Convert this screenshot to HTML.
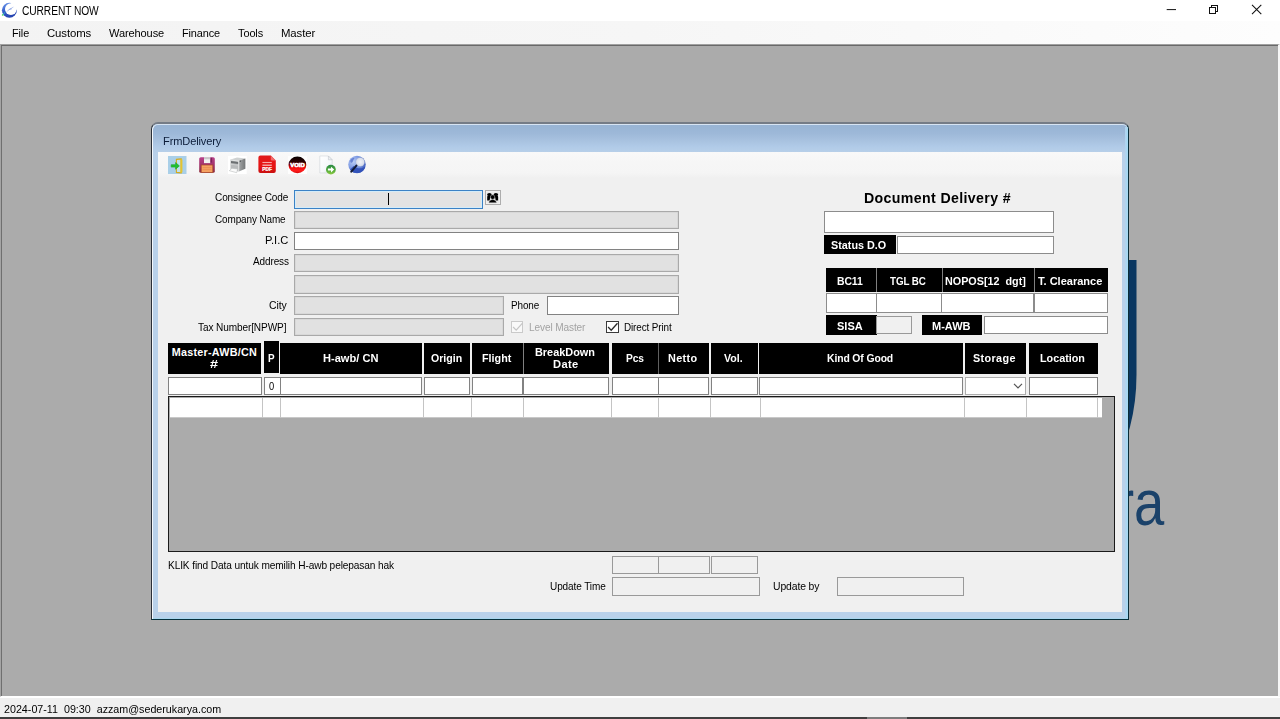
<!DOCTYPE html>
<html>
<head>
<meta charset="utf-8">
<title>CURRENT NOW</title>
<style>
*{box-sizing:border-box;margin:0;padding:0}
html,body{width:1280px;height:719px;overflow:hidden;background:#fff;font-family:"Liberation Sans",sans-serif;}
.a{position:absolute}
.tx{transform-origin:0 0;line-height:14px;white-space:pre;font-family:"Liberation Sans",sans-serif}
#titlebar{left:0;top:0;width:1280px;height:22px;background:#fff}
#menubar{left:0;top:21px;width:1280px;height:23.5px;background:linear-gradient(90deg,#f3f3f3 0%,#f6f6f6 50%,#fdfdfd 100%)}
#mdi{left:0;top:43.9px;width:1280px;height:653.3px;background:#ababab;border-top:1px solid #a0a0a0;border-left:1.1px solid #a4a4a4;border-right:2.2px solid #f6f6f6;border-bottom:1px solid #fff;box-shadow:inset 0.9px 0.9px 0 #696969}
#status{left:0;top:697px;width:1280px;height:20px;background:#f0f0f0;border-top:1px solid #fff}
#bottomline{left:0;top:717px;width:1280px;height:2px;background:#3f3f3f}
</style>
</head>
<body>
<div class="a" id="titlebar"></div>
<div class="a" id="menubar"></div>
<div class="a" id="mdi"></div>
<div class="a" id="status"></div>
<div class="a" id="bottomline"></div>
<div class="a" style="left:867px;top:717px;width:40px;height:2px;background:#7d7d7d"></div>
<svg class="a" style="left:0;top:0" width="22" height="22" viewBox="0 0 22 22">
  <defs><linearGradient id="ag" x1="0.2" y1="0" x2="0.7" y2="1"><stop offset="0" stop-color="#6c97ea"/><stop offset="0.45" stop-color="#3159c8"/><stop offset="1" stop-color="#2440ac"/></linearGradient>
  <mask id="am"><rect width="22" height="22" fill="#fff"/><circle cx="10.9" cy="9.1" r="5.95" fill="#000"/><path d="M9.4 10.3 L12.4 -2 H24 V8.6 Z" fill="#000"/></mask></defs>
  <circle cx="9.4" cy="10.3" r="7.5" fill="url(#ag)" mask="url(#am)"/>
  <path d="M5.9 12.6 L9.2 9 L14.2 6.6 L11 8.9 L12 9.3 L9.4 9.7 Z" fill="#7b96de"/>
  <circle cx="2.7" cy="14.9" r="0.9" fill="#52d86c"/>
  <path d="M3.1 14.3 L5.3 12.3" stroke="#36bccb" stroke-width="1"/>
</svg>
<svg class="a" style="left:1160px;top:0" width="120" height="22" viewBox="0 0 120 22" fill="none" stroke="#111" stroke-width="1">
  <path d="M6.7 9.6 H16"/>
  <path d="M49.5 7.5 H55.6 V13.6 H49.5 Z" shape-rendering="crispEdges"/>
  <path d="M51.5 7.5 V5.5 H57.6 V11.6 H55.6" shape-rendering="crispEdges"/>
  <path d="M92 4.8 L101.3 14.1 M101.3 4.8 L92 14.1" stroke-width="1.05"/>
</svg>
<!-- background logo peeking out -->
<svg class="a" style="left:1100px;top:250px" width="100" height="300" viewBox="0 0 100 300">
  <path d="M0 10 H36.5 V125 A207 207 0 0 1 10.7 225 L0 225 Z" fill="#0a3761"/>
</svg>
<div class="a" id="logotx" style="left:1115.8px;top:447.6px;font-family:'Liberation Sans',sans-serif;font-size:64px;line-height:110px;color:#1b426a;white-space:nowrap;transform:scaleX(0.85);transform-origin:0 0">ra</div>

<style>
#dlg{left:151px;top:121.7px;width:978.2px;height:498.1px;background:#b9d1ea;border-left:1px solid #2b3038;border-top:2px solid #757c86;border-right:1.1px solid #0a2c38;border-bottom:1.3px solid #06303c;border-radius:7px 7px 0 0;overflow:hidden}
#dlgin{left:0;top:0;width:976.1px;height:496px;border-left:1.2px solid #f4f8fc;border-top:1px solid #d7e4f3;border-radius:6px 6px 0 0;background:linear-gradient(180deg,#98b4d4 0px,#9db8d8 8px,#a7c1df 15px,#b1cbe8 22px,#b8d0e9 28px,#b9d1ea 32px,#b9d1ea 100%)}
#dlgcy{right:0;top:3px;width:2.8px;bottom:0;background:linear-gradient(90deg,#b3d3ee,#a3daf4)}
#dlgcb{left:1px;right:0;bottom:0;height:1.2px;background:#a9d6ee}
#dtitle{left:162.5px;top:134px;font-size:11.5px;line-height:14px;color:#0a1a33;white-space:nowrap}
#content{left:158px;top:152px;width:964px;height:460px;background:#f0f0f0}
#toolbar{left:158px;top:152px;width:964px;height:25.5px;background:linear-gradient(180deg,#f9f9f9,#f6f6f6 40%,#f5f5f5 80%,#f0f0f0)}
.lbl{font-family:"Liberation Sans",sans-serif;font-size:11px;line-height:14px;color:#000;white-space:nowrap}
.r{text-align:right}
.tb{background:#fff;border:1px solid #828282}
.ro{background:#e1e1e1;border:1px solid #a9a9a9;box-shadow:inset 0 0 0 0.5px #d0d0d0}
.dis{background:#f0f0f0;border:1px solid #999}
.bk{background:#000;color:#fff;font-weight:bold;font-size:11px;line-height:13px;text-align:center;display:flex;align-items:center;justify-content:center;white-space:nowrap}
.gl{background:#c4c4c4;width:1px;top:397.5px;height:20.5px}
</style>
<div class="a" id="dlg"><div class="a" id="dlgin"></div><div class="a" id="dlgcy"></div><div class="a" id="dlgcb"></div></div>
<div class="a" id="content"></div>
<div class="a" id="toolbar"></div>
<!-- 1 login -->
<svg class="a" style="left:168px;top:155.5px" width="18.5" height="18.5" viewBox="0 0 18.5 18.5">
  <rect width="18.5" height="18.5" fill="#a9cfe8"/>
  <path d="M8.4 3.4 L13.2 2.9 V16.9 L8.4 16.4 Z" fill="#bfe0ee" stroke="#d4aa1c" stroke-width="1.1"/>
  <path d="M12.4 3 L14.4 3.6 V16.2 L12.4 16.9 Z" fill="#e4c430"/>
  <path d="M3.2 8.7 H7.6 V6.6 L11.4 9.9 L7.6 13.2 V11.1 H3.2 Z" fill="#1fc030" stroke="#18a82a" stroke-width="0.6" stroke-linejoin="round"/>
</svg>
<!-- 2 floppy -->
<svg class="a" style="left:199.3px;top:156.6px" width="16" height="16" viewBox="0 0 16 16">
  <defs><linearGradient id="fg" x1="0" y1="0" x2="0" y2="1"><stop offset="0" stop-color="#b8408a"/><stop offset="0.55" stop-color="#a03468"/><stop offset="1" stop-color="#8c2c38"/></linearGradient></defs>
  <rect x="0.2" y="0.2" width="15.6" height="15.6" rx="1.6" fill="url(#fg)"/>
  <rect x="5" y="0.3" width="6.2" height="5.8" fill="#f2f2f2"/>
  <rect x="5" y="0.3" width="6.2" height="2" fill="#c8c8c8"/>
  <rect x="11.6" y="0.8" width="1.5" height="4.8" fill="#7c2458"/>
  <rect x="2.2" y="8" width="11.6" height="7.4" fill="#f5a262" stroke="#a84828" stroke-width="0.7"/>
  <path d="M3.6 10.6 H12.4 M3.6 12.6 H12.4" stroke="#e88c50" stroke-width="0.8"/>
</svg>
<!-- 3 printer -->
<svg class="a" style="left:228px;top:155.5px" width="18.7" height="18.5" viewBox="0 0 18.7 18.5">
  <defs><linearGradient id="prg" x1="0" y1="0" x2="1" y2="0"><stop offset="0" stop-color="#a4a7a8"/><stop offset="1" stop-color="#747778"/></linearGradient></defs>
  <rect width="18.7" height="18.5" fill="#fff"/>
  <path d="M2.6 3.4 L9 1.5 L17.4 2.6 L10.8 4.6 Z" fill="#cfd2d2"/>
  <path d="M2.5 3.4 L10.8 4.6 V15.6 L2.5 13.4 Z" fill="#b9bbbc"/>
  <path d="M2.5 3.4 L10.8 4.6 V5.7 L2.5 4.5 Z" fill="#e2e4e4"/>
  <path d="M3 4.9 L10.3 5.9 V7.9 L3 7 Z" fill="#6c7072"/>
  <path d="M3 8 L10.3 8.9 V9.6 L3 8.7 Z" fill="#d4d6d6"/>
  <path d="M10.8 4.6 L17.4 2.6 V12.8 L10.8 15.6 Z" fill="url(#prg)"/>
  <path d="M11.6 4.9 L13 4.5 V5.7 L11.6 6.1 Z" fill="#4e5254"/>
  <path d="M10.8 4.6 V15.6" stroke="#eceeee" stroke-width="0.8"/>
  <path d="M1.3 14.7 L3.9 12.3 L9.7 13 L8.7 16.7 Z" fill="#fbfbfb" stroke="#b4b7b8" stroke-width="0.55"/>
</svg>
<!-- 4 pdf -->
<svg class="a" style="left:258px;top:155.4px" width="18.2" height="18.4" viewBox="0 0 18.2 18.4">
  <defs><linearGradient id="pg" x1="0" y1="0" x2="0" y2="1"><stop offset="0" stop-color="#e01b1b"/><stop offset="0.6" stop-color="#e81414"/><stop offset="1" stop-color="#c90f0f"/></linearGradient></defs>
  <path d="M2.4 0.4 H12.8 L17.8 5.4 V16 A2 2 0 0 1 15.8 18 H2.4 A2 2 0 0 1 0.4 16 V2.4 A2 2 0 0 1 2.4 0.4 Z" fill="url(#pg)"/>
  <path d="M12.8 0.4 L17.8 5.4 H14 A1.2 1.2 0 0 1 12.8 4.2 Z" fill="#f06a6a"/>
  <path d="M4.4 7.5 H13.8" stroke="#f7a8a8" stroke-width="1.1"/><path d="M4.4 10.2 H13.8" stroke="#fbd4d4" stroke-width="1.1"/>
  <text x="9.1" y="15.9" font-family="Liberation Sans, sans-serif" font-weight="bold" font-size="4.9" fill="#fff" text-anchor="middle" stroke="#fff" stroke-width="0.25">PDF</text>
</svg>
<!-- 5 void -->
<svg class="a" style="left:288px;top:155.5px" width="19" height="18.6" viewBox="0 0 19 18.6">
  <defs><linearGradient id="vg" x1="0" y1="0" x2="0" y2="1"><stop offset="0" stop-color="#050000"/><stop offset="0.32" stop-color="#2a0000"/><stop offset="0.5" stop-color="#8a0202"/><stop offset="0.66" stop-color="#f00a0a"/><stop offset="0.86" stop-color="#ff1c1c"/><stop offset="1" stop-color="#d40a0a"/></linearGradient></defs>
  <rect width="19" height="18.6" fill="#fdfdfd"/>
  <ellipse cx="9.4" cy="8.9" rx="8.9" ry="8.3" fill="url(#vg)"/>
  <text x="9.5" y="11" font-family="Liberation Sans, sans-serif" font-weight="bold" font-size="5.2" fill="#fff" text-anchor="middle" stroke="#fff" stroke-width="0.5" textLength="14.4" lengthAdjust="spacingAndGlyphs">VOID</text>
</svg>
<!-- 6 doc + arrow -->
<svg class="a" style="left:318px;top:154.5px" width="20" height="20.5" viewBox="0 0 20 20.5">
  <defs><linearGradient id="dg" x1="0" y1="0" x2="1" y2="1"><stop offset="0" stop-color="#ffffff"/><stop offset="0.6" stop-color="#f6f8fb"/><stop offset="1" stop-color="#d5deed"/></linearGradient>
  <linearGradient id="gg" x1="0" y1="0" x2="0" y2="1"><stop offset="0" stop-color="#2c8a48"/><stop offset="0.5" stop-color="#4aa53a"/><stop offset="1" stop-color="#8ccb42"/></linearGradient></defs>
  <path d="M1.8 1 H10.4 L14.2 4.8 V18 H1.8 Z" fill="url(#dg)" stroke="#d6dade" stroke-width="0.7"/>
  <path d="M10.4 1 L14.2 4.8 H10.4 Z" fill="#eef0f3" stroke="#b9bdc4" stroke-width="0.5"/>
  <circle cx="12.9" cy="14.6" r="4.9" fill="url(#gg)"/>
  <path d="M9.9 13.6 H13 V11.8 L16.2 14.6 L13 17.4 V15.6 H9.9 Z" fill="#fff"/>
</svg>
<!-- 7 search globe -->
<svg class="a" style="left:347px;top:155px" width="20" height="19.5" viewBox="0 0 20 19.5">
  <defs><radialGradient id="sg" cx="0.3" cy="0.35" r="0.85"><stop offset="0" stop-color="#b9ccf5"/><stop offset="0.45" stop-color="#7b98e2"/><stop offset="1" stop-color="#2f4fb4"/></radialGradient>
  <radialGradient id="lg" cx="0.5" cy="0.5" r="0.6"><stop offset="0" stop-color="#f0f2f7"/><stop offset="0.65" stop-color="#d9dfec"/><stop offset="1" stop-color="#97a4c6"/></radialGradient></defs>
  <circle cx="10" cy="9.5" r="8.7" fill="url(#sg)"/>
  <path d="M3.4 5 C5 3 6.6 2.4 7.4 3.4 C6 4.6 6.4 6.4 5 7.6 C4 8.4 3 7 3.4 5 Z" fill="#3454bc" opacity="0.55"/>
  <path d="M3 14.5 A8.7 8.7 0 0 0 18.4 11.6 C14 14.8 9 13 6.6 11 Z" fill="#3050b8" opacity="0.9"/>
  <circle cx="13.2" cy="7" r="4.5" fill="url(#lg)"/>
  <path d="M9.4 10.6 L4.3 16.6" stroke="#141c38" stroke-width="2.1" stroke-linecap="round"/>
</svg>

<!-- left form -->
<div class="a" style="left:294px;top:190px;width:188.5px;height:19px;background:#e3e3e3;border:1px solid #3b82c6;box-shadow:inset 0 0 0 1px #d4ecf9"></div>
<div class="a" style="left:388px;top:193px;width:1px;height:12px;background:#000"></div>
<div class="a" style="left:484.5px;top:190px;width:16.5px;height:14.5px;background:#ececec;border:1px solid #adadad;box-shadow:inset 0 0 0 0.5px #f6f6f6"></div>
<div class="a ro" style="left:294px;top:211px;width:385px;height:18px"></div>
<div class="a tb" style="left:294px;top:231.5px;width:385px;height:18px"></div>
<div class="a ro" style="left:294px;top:254px;width:385px;height:18px"></div>
<div class="a ro" style="left:294px;top:275px;width:385px;height:18.5px"></div>
<div class="a ro" style="left:294px;top:296px;width:210px;height:18.5px"></div>
<div class="a ro" style="left:294px;top:317.5px;width:210px;height:18px"></div>
<div class="a tb" style="left:547px;top:296px;width:132px;height:18.5px"></div>
<div class="a" style="left:510.6px;top:321px;width:12.4px;height:12.3px;background:#f9f9f9;border:1px solid #cacaca"></div>
<div class="a" style="left:606px;top:320.9px;width:12.8px;height:12.3px;background:#fff;border:1.2px solid #3a3a3a"></div>
<svg class="a" style="left:510.6px;top:321px" width="13" height="13" viewBox="0 0 13 13"><path d="M2.1 6 L5.2 9.2 L11.5 2.2" fill="none" stroke="#c6c6c6" stroke-width="1.25"/></svg>
<svg class="a" style="left:606px;top:321px" width="13" height="13" viewBox="0 0 13 13"><path d="M2.1 6 L5.2 9.2 L11.5 2.2" fill="none" stroke="#2a2a2a" stroke-width="1.3"/></svg>
<!-- right form -->
<div class="a tb" style="left:824px;top:211px;width:229.5px;height:21.5px;border-color:#8c8c8c"></div>
<div class="a bk" style="left:824px;top:235px;width:71.5px;height:18.5px"></div>
<div class="a tb" style="left:897px;top:235.5px;width:156.5px;height:18px;border-color:#8c8c8c"></div>
<div class="a" style="left:826px;top:268px;width:281.5px;height:23.5px;background:#000"></div>
<div class="a bk" style="left:826px;top:268px;width:50px;height:23.5px"></div>
<div class="a bk" style="left:876px;top:268px;width:65.5px;height:23.5px;border-left:1px solid #808080"></div>
<div class="a bk" style="left:941.5px;top:268px;width:92px;height:23.5px;border-left:1px solid #808080"></div>
<div class="a bk" style="left:1033.5px;top:268px;width:74px;height:23.5px;border-left:1px solid #808080"></div>
<div class="a tb" style="left:826px;top:293px;width:50.5px;height:19.5px;border-color:#8c8c8c"></div>
<div class="a tb" style="left:875.5px;top:293px;width:66.5px;height:19.5px;border-color:#8c8c8c"></div>
<div class="a tb" style="left:941px;top:293px;width:93px;height:19.5px;border-color:#8c8c8c"></div>
<div class="a tb" style="left:1033.5px;top:293px;width:74px;height:19.5px;border-color:#8c8c8c"></div>
<div class="a bk" style="left:826px;top:315px;width:50.5px;height:19.5px"></div>
<div class="a dis" style="left:876px;top:315.5px;width:35.5px;height:18px"></div>
<div class="a bk" style="left:922px;top:315px;width:59.5px;height:19.5px"></div>
<div class="a tb" style="left:984px;top:316px;width:123.5px;height:18px;border-color:#8c8c8c"></div>
<!-- table header -->
<div class="a bk" style="left:168px;top:342.5px;width:93px;height:31px;line-height:12.5px;white-space:normal;padding-bottom:3px"></div>
<div class="a bk" style="left:263.5px;top:341px;width:15px;height:32px"></div>
<div class="a bk" style="left:280px;top:342.5px;width:142px;height:31px"></div>
<div class="a bk" style="left:424px;top:342.5px;width:46px;height:31px"></div>
<div class="a bk" style="left:472px;top:342.5px;width:136.5px;height:31px"></div>
<div class="a bk" style="left:472px;top:342.5px;width:50.5px;height:31px"></div>
<div class="a bk" style="left:522.5px;top:342.5px;width:86px;height:31px;line-height:12.5px;white-space:normal;border-left:1px solid #808080;padding-bottom:3px"></div>
<div class="a bk" style="left:612px;top:342.5px;width:46px;height:31px"></div>
<div class="a bk" style="left:658px;top:342.5px;width:50.5px;height:31px;border-left:1px solid #606060"></div>
<div class="a bk" style="left:711px;top:342.5px;width:46.5px;height:31px"></div>
<div class="a bk" style="left:759px;top:342.5px;width:203.5px;height:31px"></div>
<div class="a bk" style="left:965px;top:342.5px;width:61px;height:31px"></div>
<div class="a bk" style="left:1028.5px;top:342.5px;width:69.5px;height:31px"></div>
<!-- input row -->
<div class="a tb" style="left:168px;top:376.5px;width:93.5px;height:18px"></div>
<div class="a tb" style="left:263.5px;top:376.5px;width:17px;height:18px"></div>
<div class="a tb" style="left:279.5px;top:376.5px;width:142.5px;height:18px"></div>
<div class="a tb" style="left:424px;top:376.5px;width:46px;height:18px"></div>
<div class="a tb" style="left:472px;top:376.5px;width:51px;height:18px"></div>
<div class="a tb" style="left:522.5px;top:376.5px;width:86px;height:18px"></div>
<div class="a tb" style="left:612px;top:376.5px;width:46.5px;height:18px"></div>
<div class="a tb" style="left:657.5px;top:376.5px;width:51px;height:18px"></div>
<div class="a tb" style="left:711px;top:376.5px;width:46.5px;height:18px"></div>
<div class="a tb" style="left:759px;top:376.5px;width:203.5px;height:18px"></div>
<div class="a tb" style="left:965px;top:376.5px;width:61px;height:18.5px;border-color:#adadad"></div>
<svg class="a" style="left:1012px;top:382px" width="12" height="8" viewBox="0 0 12 8"><path d="M2 1.8 L6 5.8 L10 1.8" fill="none" stroke="#555" stroke-width="1.2"/></svg>
<div class="a tb" style="left:1028.5px;top:376.5px;width:69.5px;height:18px"></div>
<!-- grid -->
<div class="a" style="left:168px;top:396px;width:947px;height:155.5px;background:#ababab;border:1.5px solid #1a1a1a;border-right-width:1px;border-bottom-width:1.5px"></div>
<div class="a" style="left:169.5px;top:397.5px;width:932.5px;height:20.5px;background:#fff;border-bottom:1px solid #c8c8c8"></div>
<div class="a gl" style="left:262px"></div>
<div class="a gl" style="left:280px"></div>
<div class="a gl" style="left:423px"></div>
<div class="a gl" style="left:471px"></div>
<div class="a gl" style="left:523px"></div>
<div class="a gl" style="left:611px"></div>
<div class="a gl" style="left:658px"></div>
<div class="a gl" style="left:709.5px"></div>
<div class="a gl" style="left:760px"></div>
<div class="a gl" style="left:964px"></div>
<div class="a gl" style="left:1026px"></div>
<div class="a gl" style="left:1097px"></div>
<!-- bottom -->
<div class="a dis" style="left:612px;top:555.5px;width:47px;height:18px"></div>
<div class="a dis" style="left:658px;top:555.5px;width:51.5px;height:18px"></div>
<div class="a dis" style="left:711px;top:555.5px;width:47px;height:18px"></div>
<div class="a dis" style="left:612px;top:577px;width:148px;height:19px"></div>
<div class="a dis" style="left:837px;top:577px;width:127px;height:19px"></div>
<!-- consignee lookup button icon -->
<svg class="a" style="left:485px;top:190.5px" width="16" height="14" viewBox="0 0 16 14">
  <ellipse cx="4.4" cy="3.5" rx="2.3" ry="1.6" fill="#000"/>
  <ellipse cx="10.9" cy="3.5" rx="2.3" ry="1.6" fill="#000"/>
  <path d="M2.2 6 C2.2 4.8 3.2 4.4 4.4 4.6 L5.4 5.2 L4.6 9.6 L2.2 9.4 Z" fill="#000"/>
  <path d="M13.1 6 C13.1 4.8 12.1 4.4 10.9 4.6 L9.9 5.2 L10.7 9.6 L13.1 9.4 Z" fill="#000"/>
  <circle cx="7.65" cy="6.1" r="2.1" fill="#000" stroke="#5a5a5a" stroke-width="0.5"/>
  <path d="M4 11.6 C4.4 9.6 6 8.8 7.65 8.8 C9.3 8.8 10.9 9.6 11.3 11.6 Z" fill="#000" stroke="#5a5a5a" stroke-width="0.4"/>
</svg>

<div class="a tx" style="left:22.30px;top:4.01px;font-size:12.5px;letter-spacing:-0.120px;color:#000;transform:scaleX(0.8185)">CURRENT NOW</div>
<div class="a tx" style="left:11.80px;top:25.51px;font-size:11.8px;letter-spacing:-0.120px;color:#000;transform:scaleX(0.9220)">File</div>
<div class="a tx" style="left:46.80px;top:25.51px;font-size:11.8px;letter-spacing:-0.120px;color:#000;transform:scaleX(0.9645)">Customs</div>
<div class="a tx" style="left:108.80px;top:25.51px;font-size:11.8px;letter-spacing:-0.120px;color:#000;transform:scaleX(0.9367)">Warehouse</div>
<div class="a tx" style="left:181.80px;top:25.51px;font-size:11.8px;letter-spacing:-0.120px;color:#000;transform:scaleX(0.9257)">Finance</div>
<div class="a tx" style="left:237.80px;top:25.51px;font-size:11.8px;letter-spacing:-0.120px;color:#000;transform:scaleX(0.9310)">Tools</div>
<div class="a tx" style="left:280.80px;top:25.51px;font-size:11.8px;letter-spacing:-0.120px;color:#000;transform:scaleX(0.9644)">Master</div>
<div class="a tx" style="left:162.60px;top:134.01px;font-size:11.2px;letter-spacing:-0.120px;color:#0b1c38;transform:scaleX(0.9882)">FrmDelivery</div>
<div class="a tx" style="left:215.40px;top:190.30px;font-size:11px;letter-spacing:-0.120px;color:#000;transform:scaleX(0.9124)">Consignee Code</div>
<div class="a tx" style="left:215.40px;top:212.30px;font-size:11px;letter-spacing:-0.120px;color:#000;transform:scaleX(0.9032)">Company Name</div>
<div class="a tx" style="left:265.40px;top:233.00px;font-size:11px;letter-spacing:0.000px;color:#000;transform:scaleX(1.0138)">P.I.C</div>
<div class="a tx" style="left:252.80px;top:253.80px;font-size:11px;letter-spacing:-0.120px;color:#000;transform:scaleX(0.9069)">Address</div>
<div class="a tx" style="left:269.20px;top:298.30px;font-size:11px;letter-spacing:-0.120px;color:#000;transform:scaleX(0.9520)">City</div>
<div class="a tx" style="left:197.80px;top:319.61px;font-size:11px;letter-spacing:-0.120px;color:#000;transform:scaleX(0.9154)">Tax Number[NPWP]</div>
<div class="a tx" style="left:510.55px;top:298.30px;font-size:11px;letter-spacing:-0.120px;color:#000;transform:scaleX(0.9000)">Phone</div>
<div class="a tx" style="left:528.55px;top:320.21px;font-size:11px;letter-spacing:-0.120px;color:#a3a3a3;transform:scaleX(0.9154)">Level Master</div>
<div class="a tx" style="left:624.20px;top:320.21px;font-size:11px;letter-spacing:-0.120px;color:#000;transform:scaleX(0.8985)">Direct Print</div>
<div class="a tx" style="left:269.10px;top:378.50px;font-size:11px;letter-spacing:-0.120px;color:#000;transform:scaleX(0.8490)">0</div>
<div class="a tx" style="left:863.80px;top:192.21px;font-size:13.8px;letter-spacing:0.350px;color:#000;transform:scaleX(1.0266);font-weight:bold">Document Delivery #</div>
<div class="a tx" style="left:831.05px;top:237.51px;font-size:10.8px;letter-spacing:0.000px;color:#fff;transform:scaleX(0.9999);font-weight:bold">Status D.O</div>
<div class="a tx" style="left:836.70px;top:273.60px;font-size:10.8px;letter-spacing:-0.120px;color:#fff;transform:scaleX(0.9679);font-weight:bold">BC11</div>
<div class="a tx" style="left:889.80px;top:273.60px;font-size:10.8px;letter-spacing:-0.120px;color:#fff;transform:scaleX(0.9086);font-weight:bold">TGL BC</div>
<div class="a tx" style="left:945.40px;top:273.60px;font-size:10.8px;letter-spacing:0.000px;color:#fff;transform:scaleX(0.9983);font-weight:bold">NOPOS[12&nbsp; dgt]</div>
<div class="a tx" style="left:1037.55px;top:273.60px;font-size:10.8px;letter-spacing:0.000px;color:#fff;transform:scaleX(1.0212);font-weight:bold">T. Clearance</div>
<div class="a tx" style="left:837.30px;top:318.51px;font-size:10.8px;letter-spacing:0.000px;color:#fff;transform:scaleX(1.0197);font-weight:bold">SISA</div>
<div class="a tx" style="left:932.05px;top:318.51px;font-size:10.8px;letter-spacing:0.000px;color:#fff;transform:scaleX(1.0203);font-weight:bold">M-AWB</div>
<div class="a tx" style="left:171.70px;top:344.60px;font-size:10.8px;letter-spacing:0.251px;color:#fff;transform:scaleX(1.0000);font-weight:bold">Master-AWB/CN</div>
<div class="a tx" style="left:210.30px;top:356.60px;font-size:10.8px;letter-spacing:0.350px;color:#fff;transform:scaleX(1.3299);font-weight:bold">#</div>
<div class="a tx" style="left:267.60px;top:351.20px;font-size:10.8px;letter-spacing:-0.120px;color:#fff;transform:scaleX(0.9163);font-weight:bold">P</div>
<div class="a tx" style="left:323.30px;top:351.20px;font-size:10.8px;letter-spacing:0.000px;color:#fff;transform:scaleX(1.0269);font-weight:bold">H-awb/ CN</div>
<div class="a tx" style="left:430.80px;top:351.20px;font-size:10.8px;letter-spacing:0.000px;color:#fff;transform:scaleX(0.9781);font-weight:bold">Origin</div>
<div class="a tx" style="left:481.70px;top:351.20px;font-size:10.8px;letter-spacing:0.000px;color:#fff;transform:scaleX(0.9969);font-weight:bold">Flight</div>
<div class="a tx" style="left:534.80px;top:344.60px;font-size:10.8px;letter-spacing:0.000px;color:#fff;transform:scaleX(1.0092);font-weight:bold">BreakDown</div>
<div class="a tx" style="left:552.80px;top:356.70px;font-size:10.8px;letter-spacing:0.350px;color:#fff;transform:scaleX(1.0304);font-weight:bold">Date</div>
<div class="a tx" style="left:625.80px;top:351.20px;font-size:10.8px;letter-spacing:-0.120px;color:#fff;transform:scaleX(0.9458);font-weight:bold">Pcs</div>
<div class="a tx" style="left:667.70px;top:351.20px;font-size:10.8px;letter-spacing:0.350px;color:#fff;transform:scaleX(1.0071);font-weight:bold">Netto</div>
<div class="a tx" style="left:723.80px;top:351.20px;font-size:10.8px;letter-spacing:0.000px;color:#fff;transform:scaleX(0.9842);font-weight:bold">Vol.</div>
<div class="a tx" style="left:827.30px;top:351.20px;font-size:10.8px;letter-spacing:-0.120px;color:#fff;transform:scaleX(0.9615);font-weight:bold">Kind Of Good</div>
<div class="a tx" style="left:973.40px;top:351.20px;font-size:10.8px;letter-spacing:0.350px;color:#fff;transform:scaleX(1.0023);font-weight:bold">Storage</div>
<div class="a tx" style="left:1040.10px;top:351.20px;font-size:10.8px;letter-spacing:0.000px;color:#fff;transform:scaleX(0.9978);font-weight:bold">Location</div>
<div class="a tx" style="left:167.80px;top:558.00px;font-size:11px;letter-spacing:-0.120px;color:#000;transform:scaleX(0.9207)">KLIK find Data untuk memilih H-awb pelepasan hak</div>
<div class="a tx" style="left:549.55px;top:579.00px;font-size:11px;letter-spacing:-0.120px;color:#000;transform:scaleX(0.9113)">Update Time</div>
<div class="a tx" style="left:772.55px;top:579.00px;font-size:11px;letter-spacing:-0.120px;color:#000;transform:scaleX(0.9442)">Update by</div>
<div class="a tx" style="left:3.55px;top:702.00px;font-size:11px;letter-spacing:0.000px;color:#000;transform:scaleX(0.9734)">2024-07-11&nbsp; 09:30&nbsp; azzam@sederukarya.com</div>
</body>
</html>
